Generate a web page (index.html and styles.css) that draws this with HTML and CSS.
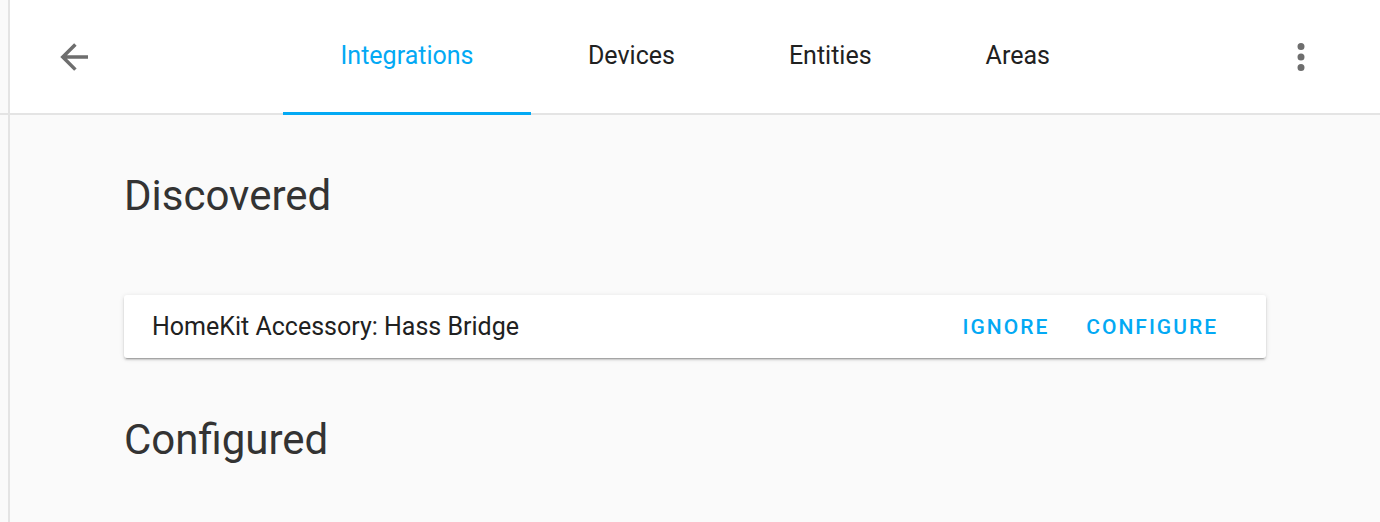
FILE: index.html
```html
<!DOCTYPE html>
<html lang="en">
<head>
  <meta charset="UTF-8">
  <meta name="viewport" content="width=device-width, initial-scale=1.0">
  <title>Configuration | Integrations</title>
  <link rel="stylesheet" href="styles.css">
</head>
<body>
  <div class="sidebar">
    <div class="sidebar-top"></div>
  </div>
  <div class="main">
    <div class="toolbar">
      <div class="toolbar-left">
        <button class="icon-btn" aria-label="Back">
          <svg viewBox="0 0 24 24" width="42" height="42"><path d="M20,11V13H8L13.5,18.5L12.08,19.92L4.16,12L12.08,4.08L13.5,5.5L8,11H20Z"/></svg>
        </button>
      </div>
      <div class="tabs">
        <a class="tab active" href="#">Integrations</a>
        <a class="tab" href="#">Devices</a>
        <a class="tab" href="#">Entities</a>
        <a class="tab" href="#">Areas</a>
      </div>
      <div class="toolbar-right">
        <button class="icon-btn" aria-label="Menu">
          <svg viewBox="0 0 24 24" width="42" height="42"><path d="M12,16A2,2 0 0,1 14,18A2,2 0 0,1 12,20A2,2 0 0,1 10,18A2,2 0 0,1 12,16M12,10A2,2 0 0,1 14,12A2,2 0 0,1 12,14A2,2 0 0,1 10,12A2,2 0 0,1 12,10M12,4A2,2 0 0,1 14,6A2,2 0 0,1 12,8A2,2 0 0,1 10,6A2,2 0 0,1 12,4Z"/></svg>
        </button>
      </div>
    </div>

    <div class="content">
      <h2 class="section-title">Discovered</h2>
      <div class="card">
        <div class="card-name">HomeKit Accessory: Hass Bridge</div>
        <div class="card-actions">
          <button class="text-btn">Ignore</button>
          <button class="text-btn">Configure</button>
        </div>
      </div>
      <h2 class="section-title configured">Configured</h2>
    </div>
  </div>
</body>
</html>
```

FILE: styles.css
```css
html, body {
  margin: 0;
  height: 100%;
}
body {
  display: flex;
  font-family: Roboto, "Noto Sans", sans-serif;
  background-color: #fafafa;
  color: #212121;
  overflow: hidden;
}
.sidebar {
  width: 8px;
  flex-shrink: 0;
  background-color: #fafafa;
  border-right: 2px solid #e4e4e4;
}
.sidebar-top {
  height: 113px;
  border-bottom: 2px solid #e4e4e4;
}
.main {
  flex: 1;
  min-width: 0;
}
.toolbar {
  display: grid;
  grid-template-columns: 1fr auto 1fr;
  align-items: center;
  height: 113px;
  background-color: #fff;
  border-bottom: 2px solid #e4e4e4;
}
.toolbar-left {
  padding-left: 43px;
  display: flex;
}
.toolbar-right {
  padding-right: 58px;
  display: flex;
  justify-content: flex-end;
}
.icon-btn {
  background: none;
  border: none;
  padding: 0;
  display: flex;
  cursor: pointer;
  fill: #6e6e6e;
}
.tabs {
  display: flex;
  height: 100%;
}
.tab {
  position: relative;
  display: flex;
  align-items: center;
  padding: 0 57px 2px;
  font-size: 25px;
  color: #212121;
  text-decoration: none;
}
.tab.active {
  color: #03a9f4;
  padding-left: 57.5px;
  padding-right: 57.5px;
}
.tab.active::after {
  content: "";
  position: absolute;
  left: 0;
  right: 0;
  bottom: -2px;
  height: 3px;
  background-color: #03a9f4;
}
.content {
  max-width: 1142px;
  margin: 0 auto;
}
.section-title {
  margin: 57px 0 0;
  font-size: 42px;
  font-weight: 400;
  line-height: 48px;
  color: #333;
}
.section-title.configured {
  margin-top: 58px;
}
.card {
  display: flex;
  align-items: center;
  justify-content: space-between;
  height: 63px;
  margin-top: 75px;
  padding: 0 34px 0 28px;
  background-color: #fff;
  border-radius: 3px;
  box-shadow: 0 2px 2px 0 rgba(0, 0, 0, .14), 0 1px 5px 0 rgba(0, 0, 0, .12), 0 3px 1px -2px rgba(0, 0, 0, .2);
}
.card-name {
  font-size: 25px;
  color: #212121;
}
.card-actions {
  display: flex;
  gap: 9px;
}
.text-btn {
  background: none;
  border: none;
  padding: 8px 14px;
  font-family: inherit;
  font-size: 21px;
  font-weight: 500;
  letter-spacing: 2px;
  text-transform: uppercase;
  color: #03a9f4;
  cursor: pointer;
}
```
